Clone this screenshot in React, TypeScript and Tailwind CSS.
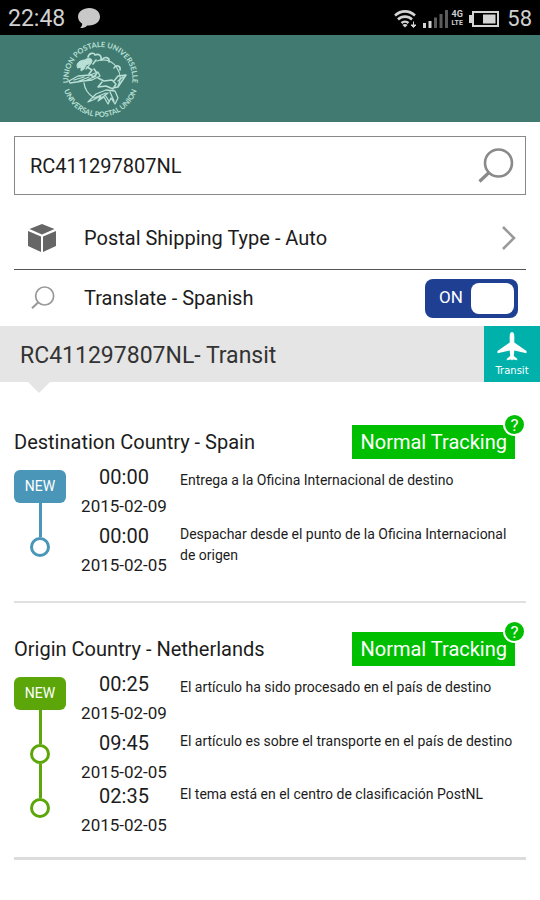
import { useState } from "react";

interface TrackEvent {
  time: string;
  date: string;
  text: string;
}

interface SectionProps {
  title: string;
  events: TrackEvent[];
  badgeClass: string;
  lineClass: string;
  ringClass: string;
  className: string;
}

const destinationEvents: TrackEvent[] = [
  {
    time: "00:00",
    date: "2015-02-09",
    text: "Entrega a la Oficina Internacional de destino",
  },
  {
    time: "00:00",
    date: "2015-02-05",
    text: "Despachar desde el punto de la Oficina Internacional de origen",
  },
];

const originEvents: TrackEvent[] = [
  {
    time: "00:25",
    date: "2015-02-09",
    text: "El artículo ha sido procesado en el país de destino",
  },
  {
    time: "09:45",
    date: "2015-02-05",
    text: "El artículo es sobre el transporte en el país de destino",
  },
  {
    time: "02:35",
    date: "2015-02-05",
    text: "El tema está en el centro de clasificación PostNL",
  },
];

const SearchIcon = ({ className }: { className: string }) => (
  <svg viewBox="0 0 36 36" fill="none" stroke="currentColor" className={className}>
    <circle cx="20.5" cy="15" r="13.500" strokeWidth="2.600" />
    <path d="M11 24.500L1.500 33.500" strokeWidth="3.200" />
  </svg>
);

const StatusBar = () => (
  <div className="flex items-center justify-between bg-black h-[35px] pt-0.5 px-2 text-[#d0d0d0]">
    <div className="flex items-center gap-3">
      <span className="text-[23px] leading-6">22:48</span>
      <svg viewBox="0 0 24 22" className="w-6 h-[22px]" fill="#c8c8c8">
        <path d="M12.500 0C6 0 1 3.700 1 8.800c0 3 1.700 5.300 4.200 6.900 0 1.700-.7 3.200-2.100 4.300 3 .1 5.300-.8 7.100-2.600 7.200.8 12.800-3.200 12.800-8.600C23 3.700 18.500 0 12.500 0z" />
      </svg>
    </div>
    <div className="flex items-center">
      <svg viewBox="0 0 24 20" className="w-6 h-5" fill="none" stroke="#d4d4d4">
        <path d="M2 6.500C8 1 16 1 22 6.500" strokeWidth="2.600" />
        <path d="M5 10.500c4-3.800 10-3.800 14 0" strokeWidth="2.600" />
        <path d="M8.500 14c2-1.800 5-1.800 7 0" strokeWidth="2.400" />
        <path d="M12 18.500l-2.600-2.500c1.500-1.200 3.700-1.200 5.200 0z" fill="#d4d4d4" stroke="none" />
        <path d="M20.500 12.500v5M18 16l2.500 2.500L23 16z" fill="#d4d4d4" strokeWidth="1" />
      </svg>
      <svg viewBox="0 0 26 18" className="w-[26px] h-[18px] ml-1.5">
        <path d="M0 13h3v5H0zM5.500 11h3v7h-3z" fill="#d4d4d4" />
        <path d="M11 7.500h3V18h-3zM16.500 4h3v14h-3zM22 0h3v18h-3z" fill="#5c5c5c" />
      </svg>
      <span className="flex flex-col items-center ml-0.5 w-3 font-bold leading-[9px]">
        <span className="text-[9px]">4G</span>
        <span className="text-[7px]">LTE</span>
      </span>
      <svg viewBox="0 0 30 18" className="w-[30px] h-[18px] ml-1.5">
        <rect x="4" y="2" width="25" height="14" fill="none" stroke="#d4d4d4" strokeWidth="2" />
        <rect x="0" y="5" width="3" height="8" fill="#d4d4d4" />
        <rect x="14" y="4.500" width="12.500" height="9" fill="#d4d4d4" />
      </svg>
      <span className="ml-2 text-[22px] leading-6">58</span>
    </div>
  </div>
);

const UpuLogo = () => (
  <svg viewBox="0 0 80 82" className="w-20 h-[82px]" fill="none" stroke="#b9e0d6" strokeLinecap="round" strokeLinejoin="round">
    <defs>
      <path id="ring-top" d="M9.500 48a32 32 0 1 1 62 0" />
      <path id="ring-bottom" d="M2.500 40a38 38 0 0 0 76 0" />
    </defs>
    <g fill="#b9e0d6" stroke="none" fontSize="7.4" fontFamily="Lato, sans-serif" fontWeight="700">
      <text textAnchor="middle">
        <textPath href="#ring-top" startOffset="50%">UNION POSTALE UNIVERSELLE</textPath>
      </text>
      <text textAnchor="middle">
        <textPath href="#ring-bottom" startOffset="50%">UNIVERSAL POSTAL UNION</textPath>
      </text>
    </g>
    {/* globe */}
    <path d="M37 22c8-3 16 0 20 7 4 6 4 13 1 18M24 44c1 7 4 11 9 14M31 24l-5 6" strokeWidth="1.300" />
    {/* figures around the globe */}
    <path d="M17 26c1-4 5-5 8-5 3-3 7-2 7 1 0 3-4 3-6 4l-2 4-3 2 0-4-3 1z" fill="#b9e0d6" strokeWidth="1" />
    <path d="M28 18c1-4 6-5 7-2 4-2 7 1 6 5M42 21c2-4 8-3 7 2M54 29c2-4 7-2 6 2M27 28l5 3-3 4 5 3 3-4-3-4M36 21l-3 4" strokeWidth="1.600" />
    <path d="M9 42l9-5 12-1 8-3 2 4-8 4-9 1-13 2zM14 41l10-3M19 42l10-4M27 41l9-4" strokeWidth="1.300" />
    <path d="M38 39l6 3 8-1 4 4-3 5-7-3-8 1 4-5M54 42l4-5 8-1-4 6-4 6-5 1M58 42l5-4" strokeWidth="1.500" />
    <path d="M28 63l8-8 10-4 9 1 3 7-3 6-4-6-3 6-4-7-6 4 3-5-8 4zM34 59l12-5M40 60l8-6M50 53l4 9M45 56l4 6" strokeWidth="1.300" />
  </svg>
);

const TrackSection = ({
  title,
  events,
  badgeClass,
  lineClass,
  ringClass,
  className,
}: SectionProps) => (
  <section className={className}>
    <div className="flex items-center justify-between pr-[11px]">
      <h2 className="text-[20px] leading-6">{title}</h2>
      <div className="relative">
        <div className="bg-[#00bf00] px-2 h-[34px] text-[20px] leading-[34px] text-white">
          Normal Tracking
        </div>
        <button
          aria-label="Help"
          className="absolute -top-3 -right-[11px] size-[23px] rounded-full border-2 border-white bg-[#00bf00] text-white text-[17px] leading-5"
        >
          ?
        </button>
      </div>
    </div>
    <div className="flex mt-1.5">
      <div className="flex flex-col items-center w-[52px] pt-[5px] shrink-0">
        <span
          className={`w-full h-[33px] rounded-md text-center text-[14px] leading-[33px] text-white ${badgeClass}`}
        >
          NEW
        </span>
        {events.slice(1).map((event) => (
          <div key={event.time} className="flex flex-col items-center">
            <span className={`w-[3px] h-[34px] ${lineClass}`} />
            <span className={`size-5 rounded-full border-3 ${ringClass}`} />
          </div>
        ))}
      </div>
      <ol className="grow ml-0.5">
        {events.map((event) => (
          <li key={event.text} className="flex first:pb-1.5 group">
            <div className="w-28 shrink-0 text-center">
              <div className="text-[20px] leading-6">{event.time}</div>
              <div className="mt-[5px] text-[17px] leading-6">{event.date}</div>
            </div>
            <p className="pr-2 text-[14px] leading-[21px] group-first:pt-[5px]">{event.text}</p>
          </li>
        ))}
      </ol>
    </div>
  </section>
);

const App = () => {
  const [code, setCode] = useState("RC411297807NL");
  const [translate, setTranslate] = useState(true);

  return (
    <div className="min-h-screen bg-white text-[#1c1c1c] font-['Roboto',sans-serif]">
      <StatusBar />
      <header className="bg-[#417a70] h-[87px] pl-15 pt-1">
        <UpuLogo />
      </header>

      <main>
        <div className="px-3.5 pt-3.5">
          <form
            className="flex items-center h-[59px] border border-[#888] pl-[15px] pr-[11px]"
            onSubmit={(e) => e.preventDefault()}
          >
            <input
              aria-label="Tracking number"
              value={code}
              onChange={(e) => setCode(e.target.value)}
              className="grow min-w-0 text-[20px] leading-6 outline-none"
            />
            <button aria-label="Search" className="text-[#8a8a8a]">
              <SearchIcon className="size-9" />
            </button>
          </form>

          <button className="flex items-center w-full h-[75px] pt-3 pr-2.5 pl-3.5 border-b border-[#555] text-left">
            <svg viewBox="0 0 28 28" className="size-7" fill="#666">
              <path d="M14 0l12.500 5L14 10.500 1.500 5z" />
              <path d="M0 7l13 5.500V28L0 22z" />
              <path d="M28 7l-13 5.500V28l13-6z" />
            </svg>
            <span className="grow ml-7 text-[20px] leading-6">Postal Shipping Type - Auto</span>
            <svg viewBox="0 0 14 24" className="w-3.5 h-6" fill="none" stroke="#999" strokeWidth="2.600">
              <path d="M1 1l11 11L1 23" />
            </svg>
          </button>

          <div className="flex items-center h-14 pl-[17px] pr-2">
            <SearchIcon className="size-6 text-[#999]" />
            <span className="grow ml-[29px] text-[20px] leading-6">Translate - Spanish</span>
            <button
              role="switch"
              aria-checked={translate}
              aria-label="Translate"
              onClick={() => setTranslate(!translate)}
              className="flex items-center justify-between w-[93px] h-[39px] rounded-lg bg-[#1f3f93] pl-3.5 pr-1 text-white text-[17px]"
            >
              {translate ? "ON" : "OFF"}
              <span className="w-[43px] h-[31px] rounded-lg bg-white" />
            </button>
          </div>
        </div>

        <div className="relative flex items-center justify-between h-14 pl-5 bg-[#e5e5e5]">
          <h1 className="pt-1 text-[23px] leading-7 text-[#333]">{code}- Transit</h1>
          <div className="flex flex-col items-center w-14 h-14 pt-1.5 bg-[#00b1ab] text-white">
            <svg viewBox="0 0 30 29" className="w-[30px] h-[29px] shrink-0" fill="currentColor">
              <path d="M15 0c-1.500 0-2.300 2-2.300 4v6.500L.5 19v2.200l12.200-2.700.5 5.500-3.400 2.700v1.600l4.400-.7.8 1 .8-1 4.400.7v-1.600L16.800 24l.5-5.500 12.200 2.700V19l-12.200-8.500V4c0-2-.8-4-2.300-4z" />
            </svg>
            <span className="mt-0.5 text-[10px] leading-4 font-['DejaVu_Sans',sans-serif]">Transit</span>
          </div>
          <svg viewBox="0 0 22 11" className="absolute left-7 top-full w-[22px] h-[11px]" fill="#e5e5e5">
            <path d="M0 0h22L11 11z" />
          </svg>
        </div>

        <div className="px-3.5 pt-[43px]">
          <TrackSection
            title="Destination Country - Spain"
            events={destinationEvents}
            badgeClass="bg-[#4a96b8]"
            lineClass="bg-[#4a96b8]"
            ringClass="border-[#4a96b8]"
            className="pb-6 border-b-2 border-[#e0e0e0]"
          />
          <TrackSection
            title="Origin Country - Netherlands"
            events={originEvents}
            badgeClass="bg-[#5ca60a]"
            lineClass="bg-[#5ca60a]"
            ringClass="border-[#5ca60a]"
            className="pt-[29px] pb-5 border-b-3 border-[#dcdcdc]"
          />
        </div>
      </main>
    </div>
  );
};

export default App;
